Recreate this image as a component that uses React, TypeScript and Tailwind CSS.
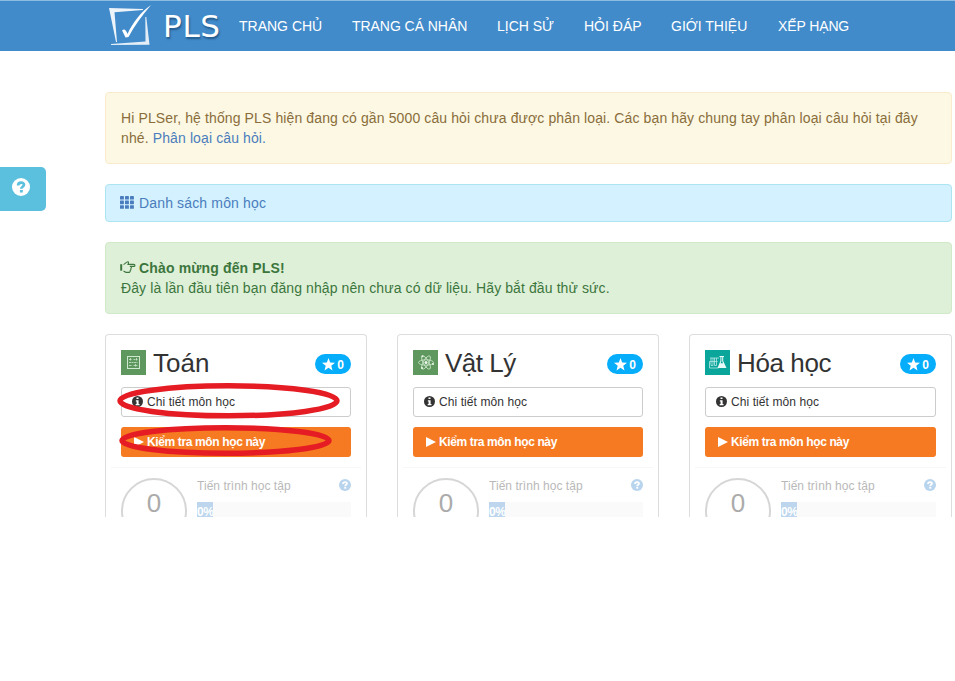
import type { ReactNode } from "react";

const nav = [
  { label: "TRANG CHỦ", width: "w-[83px]" },
  { label: "TRANG CÁ NHÂN", width: "w-[115px] tracking-[-0.05px]" },
  { label: "LỊCH SỬ", width: "w-[57px]" },
  { label: "HỎI ĐÁP", width: "w-[57px]" },
  { label: "GIỚI THIỆU", width: "w-[77px]" },
  { label: "XẾP HẠNG", width: "w-[72px] tracking-[-0.12px]" },
];

function Logo() {
  return (
    <svg className="h-[42px] w-[44px] shrink-0" viewBox="0 0 44 42" fill="#fff">
      <path d="M0 3 L34 4 L34 5 L5.500 7.200 L8 37 L7 37 Z" opacity=".9" />
      <path d="M37.300 12 L40.500 39.800 L2 40 L2 39 L36.500 36.500 L36.300 12 Z" opacity=".85" />
      <path d="M13 25.500 C15.500 23.500 17 25 18.500 29 C24 17 32 7 42 0 C33 11 25 21 19.500 32 L16.500 32.500 C15 29.500 14 27 13 25.500 Z" />
    </svg>
  );
}

function QuestionIcon({ className }: { className: string }) {
  return (
    <svg className={className} viewBox="0 0 18 18">
      <circle cx="9" cy="9" r="9" fill="currentColor" />
      <path d="M6.100 7.400c0-3.800 5.900-3.600 5.900-.6 0 2-2.700 1.900-2.700 4" fill="none" stroke="var(--mark)" strokeWidth="2.7" />
      <rect x="7.900" y="12" width="2.900" height="2.500" fill="var(--mark)" />
    </svg>
  );
}

function GridIcon() {
  return (
    <svg className="-mt-px -ml-px h-[13px] w-[14px]" viewBox="0 0 14 13" fill="#4a7dbd">
      {[0, 4.6, 9.2].map((y) => [0, 5, 10].map((x) => <rect key={`${x}-${y}`} x={x} y={y} width="3.9" height="3.6" rx=".4" />))}
    </svg>
  );
}

function HandIcon() {
  return (
    <svg className="-mt-px -ml-px h-[13px] w-[16px]" viewBox="0 0 16 13" fill="none" stroke="#3c763d" strokeWidth="1.1">
      <path d="M1.200 3.200v6.500" strokeWidth="2" />
      <path d="M3.500 3.500 C5 3 6 .8 8 .8 C9 1 8.400 2.600 8 3.400 H13.700 C15.400 3.400 15.400 5.400 13.700 5.400 H9.800 M11 5.500 C11.600 6 11.600 7 10.800 7.600 C11.200 8.600 11 9.200 10.200 9.600 C10.400 11 9.500 11.400 8.500 11.400 H6.300 C5 11.400 4.300 10.300 3.500 10" />
    </svg>
  );
}

function MathIcon() {
  return (
    <svg className="h-[25px] w-[25px]" viewBox="0 0 25 25">
      <rect width="25" height="25" fill="#5e985e" />
      <rect x="6.500" y="6.500" width="12" height="12" fill="none" stroke="#cfe6cf" />
      <path d="M8 9.500h3M9.500 8v3M12.500 9.500h4M8 12.500h8.500M8 15.500h3M12.500 15.500h4M14.500 14v3M15.500 8v3" stroke="#cfe6cf" strokeWidth=".8" strokeDasharray="2 .5" />
    </svg>
  );
}

function AtomIcon() {
  return (
    <svg className="h-[25px] w-[25px]" viewBox="0 0 25 25">
      <rect width="25" height="25" fill="#5e985e" />
      <g fill="none" stroke="#cfe6cf" strokeWidth=".8">
        <ellipse cx="13" cy="12.500" rx="7.500" ry="2.700" />
        <ellipse cx="13" cy="12.500" rx="7.500" ry="2.700" transform="rotate(60 13 12.5)" />
        <ellipse cx="13" cy="12.500" rx="7.500" ry="2.700" transform="rotate(120 13 12.5)" />
      </g>
      <g fill="#eef8ee">
        <circle cx="13" cy="12.500" r="1.500" />
        <circle cx="9.500" cy="6.200" r="1" />
        <circle cx="20" cy="14" r="1" />
        <circle cx="9" cy="18" r="1" />
      </g>
    </svg>
  );
}

function FlaskIcon() {
  return (
    <svg className="h-[25px] w-[25px]" viewBox="0 0 25 25">
      <rect width="25" height="25" fill="#0aa59b" />
      <path d="M5 8h9M6 8v7.500h2V8M9.500 8v7.500h2V8M4.500 11.500h8M4.500 11.500v6.500h9" fill="none" stroke="#b5e8e4" strokeWidth=".8" />
      <path d="M14.500 6h4.500v1h-.8v4L21.500 18h-9L15.400 11V7h-.9z" fill="#e9fbf9" />
      <path d="M16.400 7v4.200l-.9 2h2.600l-.9-2V7z" fill="#0aa59b" />
    </svg>
  );
}

function Subject({ name, icon, label }: { name: string; icon: ReactNode; label: string }) {
  return (
    <section className="h-[183px] rounded-t border border-b-0 border-[#ddd] px-[15px] pt-[15px]">
      <div className="flex h-[25px] items-center">
        {icon}
        <h2 className={`mt-[2px] ml-[7px] grow text-[26px] leading-[25px] whitespace-nowrap text-[#333] ${label}`}>{name}</h2>
        <span className="mt-[3px] flex h-5 w-9 items-center justify-center gap-[2px] rounded-full bg-[#05adfb] text-[12px] font-bold text-white">
          <svg className="h-[13px] w-[13px]" viewBox="0 0 14 14" fill="#fff">
            <path d="M7 0l1.800 4.800 5.200.2-4 3.300 1.300 5.100L7 10.500l-4.300 2.900L4 8.300 0 5l5.200-.2z" />
          </svg>
          <span className="mt-px">0</span>
        </span>
      </div>
      <button className="mt-3 flex h-[30px] w-full items-center rounded-[3px] border border-[#ccc] pl-[10px] text-[12px] text-[#333]">
        <svg className="-mt-px mr-1 h-[11px] w-[11px]" viewBox="0 0 12 12">
          <circle cx="6" cy="6" r="6" fill="#333" />
          <path d="M4.900 1.700h2.200v1.700H4.900zM4.200 4.700h3v4h1v1.300H4v-1.300h1V6h-.8z" fill="#fff" />
        </svg>
        <span className="whitespace-nowrap tracking-[0.08px]">Chi tiết môn học</span>
      </button>
      <button className="mt-[10px] flex h-[30px] w-full items-center rounded-[3px] bg-[#f67a22] pl-[13px] text-[12px] font-bold text-white">
        <svg className="mr-[3px] h-[10px] w-[10px]" viewBox="0 0 10 10" fill="#fff"><path d="M0 0L10 5 0 10z" /></svg>
        <span className="whitespace-nowrap tracking-[-0.37px]">Kiểm tra môn học này</span>
      </button>
      <div className="-mx-[10px] mt-[10px] h-px bg-[#f7f7f7]" />
      <div className="flex h-[49px] overflow-hidden pt-[10px]">
        <div className="flex h-[66px] w-[66px] shrink-0 justify-center rounded-full border-2 border-[#d6d6d6] pt-[7px] text-[26px] leading-[32px] text-[#ababab]">0</div>
        <div className="ml-[10px] grow">
          <div className="flex h-[15px] items-center justify-between text-[12px] text-[#b9b9b9]">
            <span className="whitespace-nowrap tracking-[0.04px]">Tiến trình học tập</span>
            <QuestionIcon className="-mt-px h-[12px] w-[12px] text-[#b9d4ed] [--mark:#fff]" />
          </div>
          <div className="mt-[9px] h-5 bg-[#fafafa]">
            <div className="h-5 w-4 overflow-hidden bg-[#bdd6ed] text-[12px] leading-5 font-bold tracking-[-0.5px] text-white">0%</div>
          </div>
        </div>
      </div>
    </section>
  );
}

export default function App() {
  return (
    <div className="relative h-[681px] w-[955px] overflow-hidden bg-white font-['Liberation_Sans',Arial,sans-serif] text-[14px] leading-5">
      <header className="flex h-[51px] items-center border-t border-[#8ebbe2] bg-[#428bca] pl-[109px] text-white">
        <Logo />
        <span className="ml-[10px] w-[60px] font-['DejaVu_Sans',sans-serif] text-[31px] leading-[40px] tracking-[0.7px] whitespace-nowrap [text-shadow:1px_2px_2px_#24598a]">PLS</span>
        <nav className="ml-4 flex gap-[30px]">
          {nav.map((item) => <a key={item.label} className={`whitespace-nowrap ${item.width}`}>{item.label}</a>)}
        </nav>
      </header>
      <main className="ml-[105px] w-[847px] pt-[41px]">
        <div className="h-[72px] rounded border border-[#faebcc] bg-[#fcf8e3] p-[15px] tracking-[0.115px] text-[#8a6d3b]">
          <p className="whitespace-nowrap">Hi PLSer, hệ thống PLS hiện đang có gần 5000 câu hỏi chưa được phân loại. Các bạn hãy chung tay phân loại câu hỏi tại đây</p>
          <p>nhé. <a className="text-[#4a7dbd]">Phân loại câu hỏi.</a></p>
        </div>
        <div className="mt-5 flex h-[38px] items-center gap-[5px] rounded border border-[#ade4f1] bg-[#d3f1fe] px-[15px] text-[#4a7dbd]">
          <GridIcon />
          <span className="whitespace-nowrap tracking-[0.15px]">Danh sách môn học</span>
        </div>
        <div className="mt-5 h-[72px] rounded border border-[#d0e9c6] bg-[#dff0d8] p-[15px] text-[#3c763d]">
          <div className="flex items-center gap-[3px]"><HandIcon /><b className="whitespace-nowrap tracking-[0.15px]">Chào mừng đến PLS!</b></div>
          <p className="whitespace-nowrap tracking-[0.1px]">Đây là lần đầu tiên bạn đăng nhập nên chưa có dữ liệu. Hãy bắt đầu thử sức.</p>
        </div>
        <div className="mt-5 grid grid-cols-[262px_262px_263px] gap-[30px]">
          <Subject name="Toán" icon={<MathIcon />} label="tracking-normal" />
          <Subject name="Vật Lý" icon={<AtomIcon />} label="tracking-[-0.5px]" />
          <Subject name="Hóa học" icon={<FlaskIcon />} label="tracking-[-0.4px]" />
        </div>
      </main>
      <button className="absolute top-[167px] left-0 flex h-11 w-[46px] justify-center rounded-r-[5px] bg-[#5bc0de] pt-[11px] pr-1 text-white">
        <QuestionIcon className="h-[18px] w-[18px] [--mark:#5bc0de]" />
      </button>
      <svg className="pointer-events-none absolute top-[380px] left-[112px] h-20 w-[235px]" viewBox="0 0 235 80" fill="none" stroke="#e51c23">
        <ellipse cx="116.500" cy="20.800" rx="108.500" ry="15" strokeWidth="5.500" />
        <ellipse cx="113.500" cy="60.500" rx="103.500" ry="12.800" strokeWidth="5.500" />
      </svg>
    </div>
  );
}
